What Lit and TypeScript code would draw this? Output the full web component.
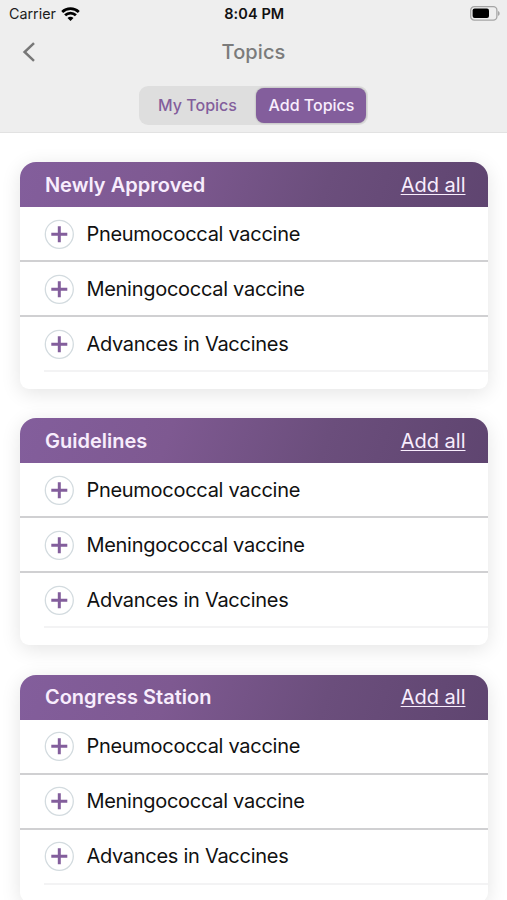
import { LitElement, html, css } from "lit";
import { customElement, property } from "lit/decorators.js";

@customElement("topic-card")
class TopicCard extends LitElement {
  @property() heading = "";
  @property({ attribute: false }) topics: string[] = [];

  static styles = css`
    :host { display: block; height: 227px; border-radius: 16px 16px 9px 9px; overflow: hidden; background: #fff; box-shadow: 0 4px 20px rgba(0, 0, 0, 0.11); }
    .head { height: 45px; display: flex; align-items: center; justify-content: space-between; padding: 0 22px 0 24.5px; box-sizing: border-box; color: #f8edfd; font-size: 20px; background: linear-gradient(110deg, #835e9c 0%, #7e5991 32%, #6b4e7c 65%, #5f4570 100%); }
    .title { font-weight: 600; letter-spacing: 0.02px; }
    .all { text-decoration: underline; text-decoration-thickness: 1px; text-underline-offset: 2px; text-decoration-skip-ink: none; }
    .row { height: 55px; box-sizing: border-box; display: flex; align-items: center; gap: 12px; padding-left: 24px; border-bottom: 2px solid #d0d0d2; font-size: 20px; letter-spacing: -0.28px; color: #111; }
    .row:last-child { border-bottom-color: #fff; }
    .rows::after { content: ""; display: block; height: 2px; margin: -2px 0 0 24px; background: #f3f3f4; }
    .plus { display: block; width: 30px; height: 30px; flex: none; }
  `;

  render() {
    return html`
      <div class="head"><span class="title">${this.heading}</span><span class="all">Add all</span></div>
      <div class="rows">
        ${this.topics.map((t) => html`<div class="row">
          <svg class="plus" viewBox="0 0 30 30">
            <circle cx="15.3" cy="15.3" r="14" fill="#fff" stroke="#d3dbdf" stroke-width="1.3" />
            <path d="M15.3 7.3v16M7.3 15.3h16" stroke="#835e9c" stroke-width="3" />
          </svg>
          <span class="label">${t}</span>
        </div>`)}
      </div>
    `;
  }
}

@customElement("app-root")
class AppRoot extends LitElement {
  static styles = css`
    :host { display: block; width: 507px; height: 900px; overflow: hidden; background: #fff; font-family: Inter, "Liberation Sans", sans-serif; }
    .top { height: 133px; box-sizing: border-box; background: #eee; border-bottom: 1px solid #e2e2e2; }
    .status { height: 27px; display: grid; grid-template-columns: 1fr auto 1fr; align-items: center; padding: 0 7.5px 0 9px; font-size: 14.3px; color: #1c1c1c; box-sizing: border-box; }
    .left { display: flex; align-items: center; gap: 5.5px; }
    .time { font-weight: 600; font-size: 14.5px; letter-spacing: 0.1px; color: #111; }
    .battery { justify-self: end; display: block; }
    .nav { height: 49px; display: grid; grid-template-columns: 60px 1fr 60px; align-items: center; }
    .back { display: block; margin-left: 22px; }
    .name { text-align: center; font-size: 20px; font-weight: 500; letter-spacing: 0.1px; color: #7b7b7b; }
    .tabs { display: flex; width: 229px; height: 39px; box-sizing: border-box; padding: 2px; margin: 10px 0 0 139px; border-radius: 9px; background: #dedede; font-size: 16px; font-weight: 500; }
    .tab { display: flex; align-items: center; justify-content: center; width: 115px; box-sizing: border-box; padding: 0 2px 1px 0; color: #835e9c; }
    .tab.on { width: 110px; padding: 0 0 1px 1px; color: #f8edfd; background: #835e9c; border-radius: 8px; box-shadow: 0 0 2px rgba(0, 0, 0, 0.3); }
    .list { display: flex; flex-direction: column; gap: 29.2px; padding: 29.2px 19.5px 0 20.4px; }
  `;

  render() {
    const topics = ["Pneumococcal vaccine", "Meningococcal vaccine", "Advances in Vaccines"];
    return html`
      <div class="top">
        <div class="status">
          <div class="left">
            <span>Carrier</span>
            <svg width="19" height="14" viewBox="0 0 19 14" fill="none" stroke="#000" stroke-width="2.8">
              <path d="M1.2 4.9C5.8 .6 13.2 .6 17.8 4.9" />
              <path d="M4.1 8.3C7.1 5.4 11.9 5.4 14.9 8.3" />
              <path d="M9.5 13.9L6.5 10.9C8.2 9.4 10.8 9.4 12.5 10.9Z" fill="#000" stroke="none" />
            </svg>
          </div>
          <span class="time">8:04 PM</span>
          <svg class="battery" width="30" height="15" viewBox="0 0 30 15">
            <rect x=".7" y=".7" width="26.2" height="13.4" rx="3.6" fill="none" stroke="#a5a5a5" stroke-width="1.3" />
            <rect x="2.6" y="2.6" width="16.4" height="9.5" rx="2" fill="#000" />
            <path d="M28 5v4.8c2.2-.8 2.2-4 0-4.8z" fill="#a5a5a5" />
          </svg>
        </div>
        <div class="nav">
          <svg class="back" width="14" height="20" viewBox="0 0 14 20" fill="none" stroke="#777" stroke-width="2.5"><path d="M12 1.2L2.6 10L12 18.8" /></svg>
          <span class="name">Topics</span>
        </div>
        <div class="tabs"><div class="tab">My Topics</div><div class="tab on">Add Topics</div></div>
      </div>
      <div class="list">
        ${["Newly Approved", "Guidelines", "Congress Station"].map((h) => html`<topic-card .heading=${h} .topics=${topics}></topic-card>`)}
      </div>
    `;
  }
}
